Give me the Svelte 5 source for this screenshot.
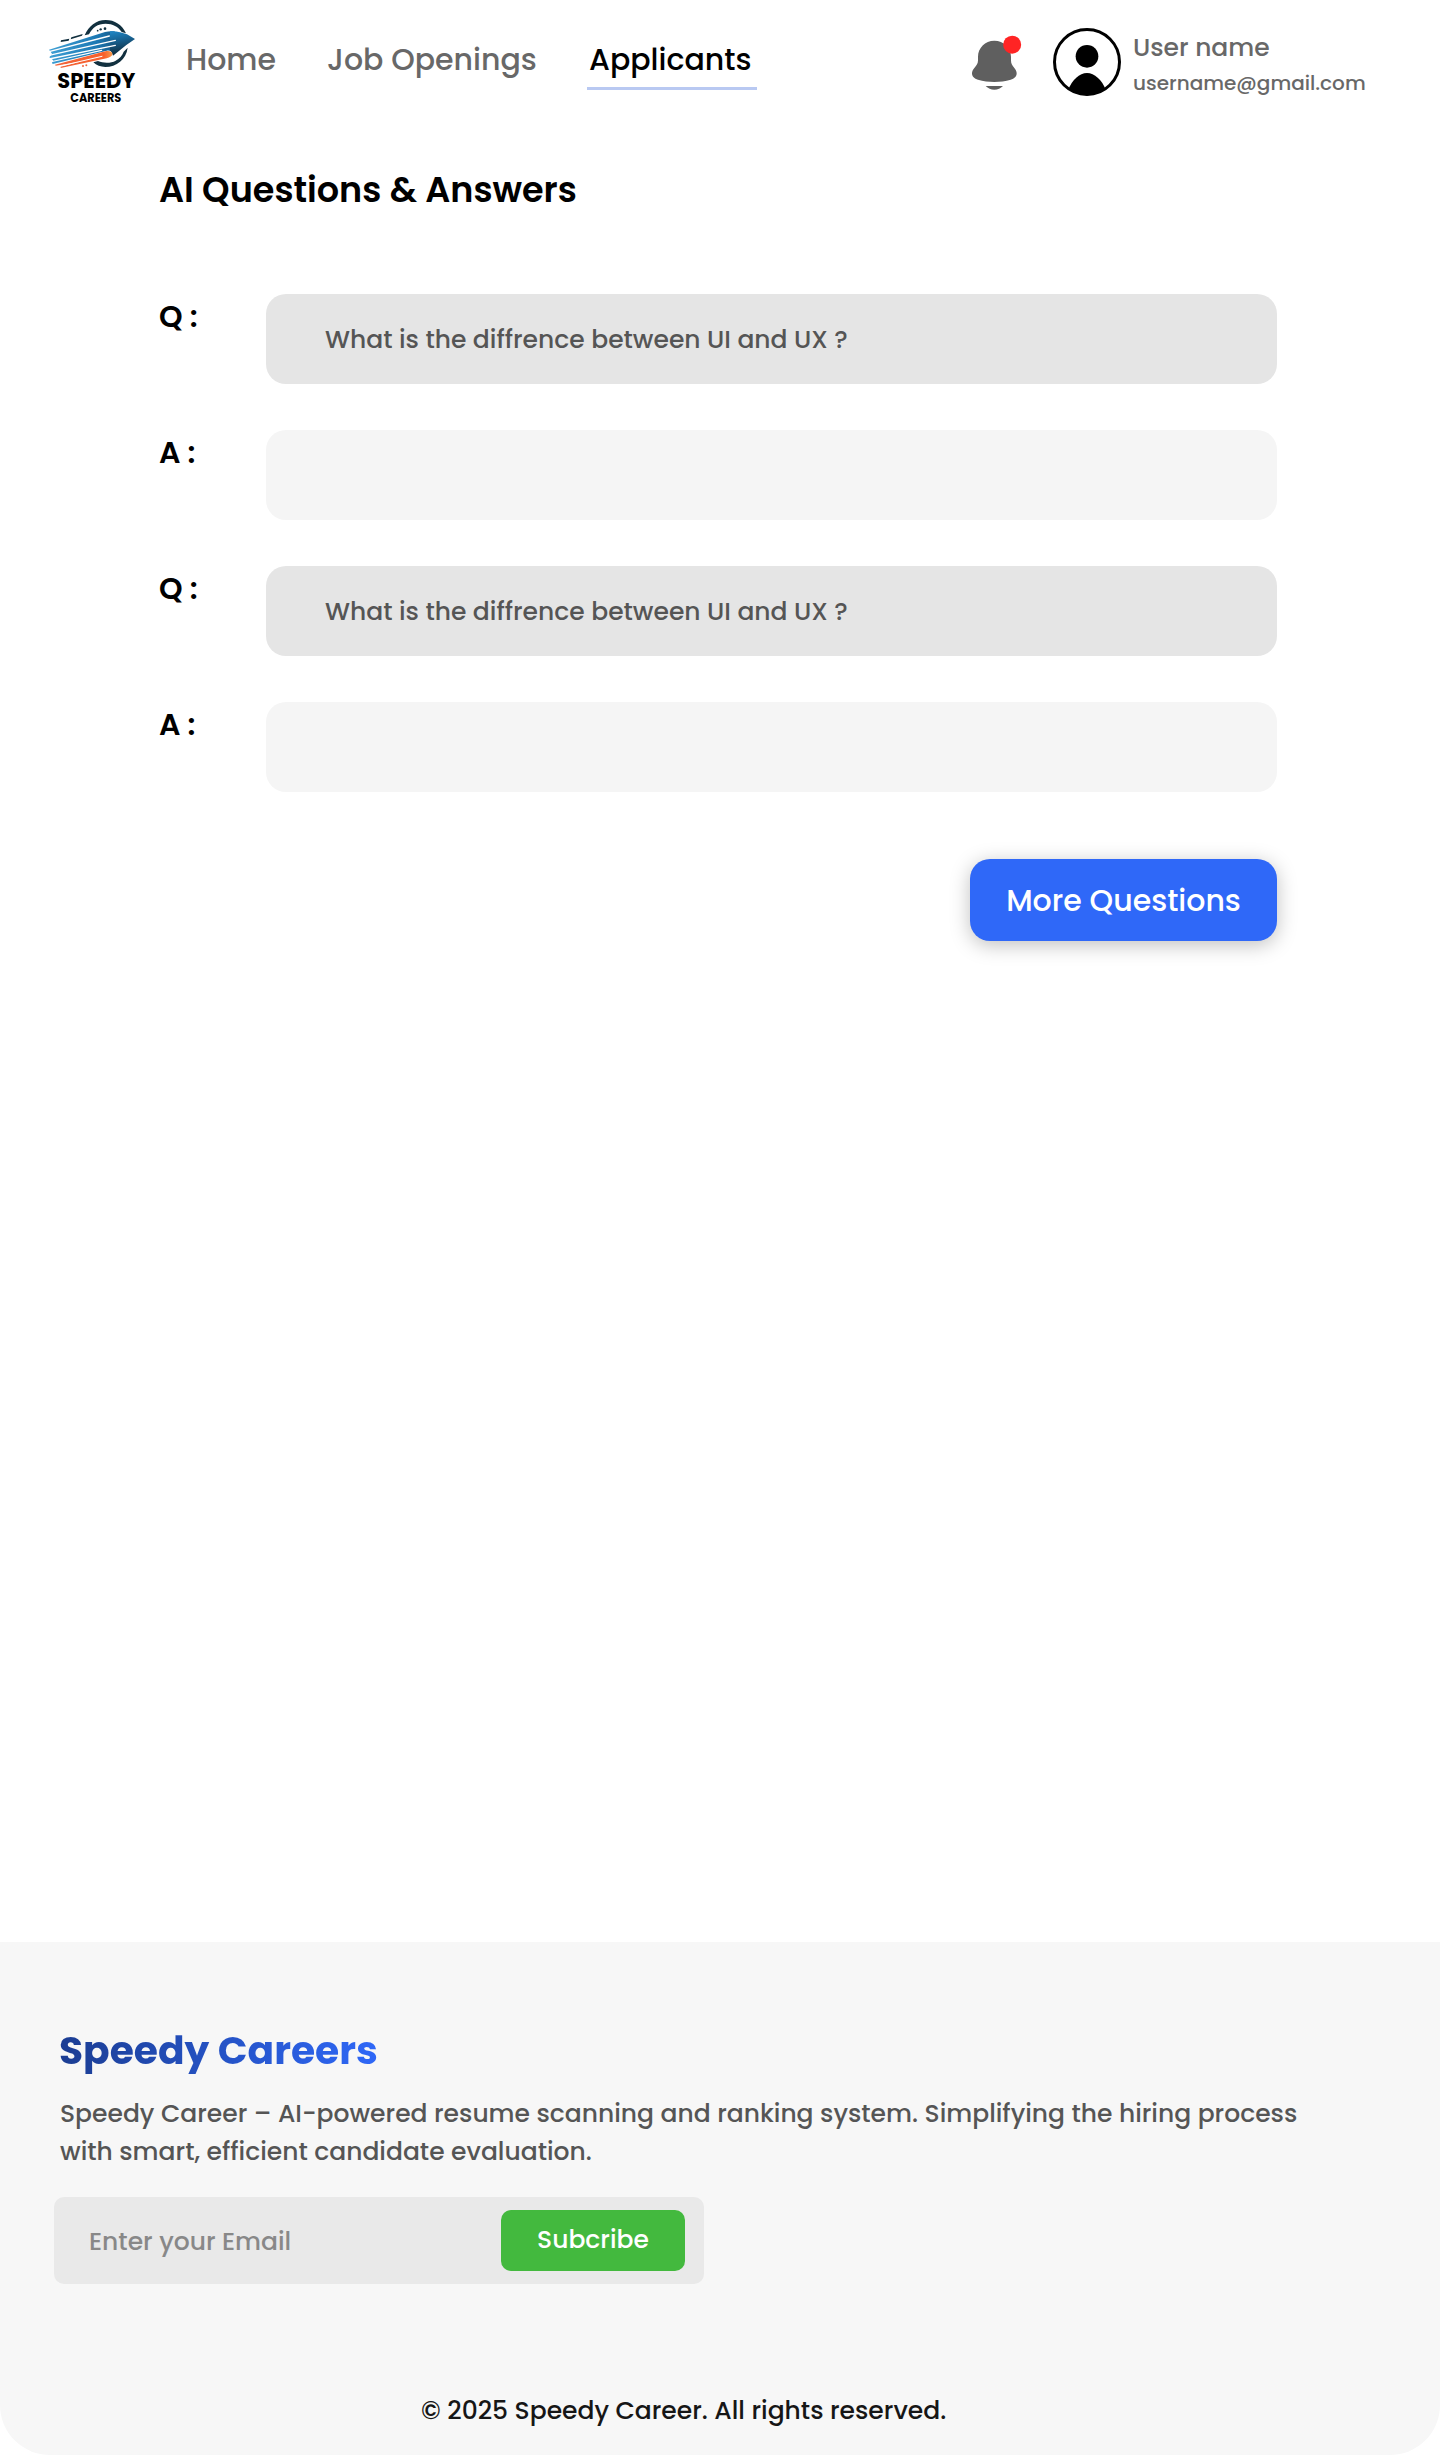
<script>
  const nav = [
    { label: 'Home', active: false },
    { label: 'Job Openings', active: false },
    { label: 'Applicants', active: true }
  ];
  const question = 'What is the diffrence between UI and UX ?';
  const entries = [
    { kind: 'q', text: question },
    { kind: 'a', text: '' },
    { kind: 'q', text: question },
    { kind: 'a', text: '' }
  ];
</script>

<div class="page">
  <header>
    <svg class="logo" viewBox="0 0 390 360" role="img" aria-label="Speedy Careers">
      <defs>
        <linearGradient id="wing" gradientUnits="userSpaceOnUse" x1="60" y1="150" x2="290" y2="175">
          <stop offset="0" stop-color="#3f9fd4" />
          <stop offset="0.6" stop-color="#1b78b3" />
          <stop offset="0.85" stop-color="#155480" />
          <stop offset="1" stop-color="#123a54" />
        </linearGradient>
        <linearGradient id="nose" gradientUnits="userSpaceOnUse" x1="255" y1="92" x2="268" y2="160">
          <stop offset="0" stop-color="#1f86c6" />
          <stop offset="0.45" stop-color="#17608f" />
          <stop offset="1" stop-color="#0f2f42" />
        </linearGradient>
        <linearGradient id="flame" gradientUnits="userSpaceOnUse" x1="75" y1="190" x2="247" y2="160">
          <stop offset="0" stop-color="#f0643c" />
          <stop offset="0.85" stop-color="#f9602a" />
          <stop offset="1" stop-color="#f79a4b" />
        </linearGradient>
      </defs>
      <g fill="#12303f">
        <path d="M164 106C176 78 198 60 227 60C254 60 276 74 288 100L275 96C265 80 248 71 227 71C203 71 187 83 177 103Z" />
        <path d="M190 187L204 183C220 190 243 190 257 182C268 176 277 166 281 155L293 143C289 178 259 201 226 201C212 201 199 196 190 187Z" />
        <path d="M124 112L158 102L156 107L122 118ZM93 121L118 116L116 122L92 126Z" />
        <circle cx="203" cy="92" r="2.5" /><circle cx="212" cy="88" r="3.5" /><circle cx="225" cy="86" r="4" />
      </g>
      <path fill="url(#wing)" d="M57 149L225 96C235 93 246 93 254 94L262 154L249 160C244 152 238 151 230 152L68 192L66 188L70 181L58 172L66 161Z" />
      <path fill="url(#nose)" d="M240 94C258 92 276 98 291 103L315 117L289 135L249 167C246 157 244 154 240 152Z" />
      <g fill="none" stroke="#fff" stroke-width="4" stroke-linecap="round">
        <path d="M57 155L238 108" />
        <path d="M57 166L256 121" />
        <path d="M57 177L256 136" />
        <path d="M60 186L215 151" stroke-width="3.5" />
      </g>
      <path fill="url(#flame)" d="M75 194L226 154C238 151 247 155 247 162C247 168 240 172 230 175L92 204L92 200L150 185L77 197Z" />
      <path d="M100 196L216 169" stroke="#fff" stroke-width="3" stroke-linecap="round" />
      <g fill="#f0643c"><circle cx="159" cy="198" r="3" /><circle cx="169" cy="196" r="3" /></g>
      <text class="brand" x="82" y="264" font-size="63" textLength="234" lengthAdjust="spacingAndGlyphs">SPEEDY</text>
      <text class="brand" x="121" y="305" font-size="34" textLength="153" lengthAdjust="spacingAndGlyphs">CAREERS</text>
    </svg>

    <nav>
      {#each nav as item}
        <a class:active={item.active} href="#top">{item.label}</a>
      {/each}
    </nav>

    <div class="account">
      <svg class="bell" viewBox="60 70 162 180" aria-label="Notifications">
        <path fill="#5f5f5f" d="M133 93C105 93 84 115 84 141V152C84 162 80 167 73 175C69 180 66 185 66 191C66 201 73 207 84 210C115 219 151 219 182 210C193 207 200 201 200 191C200 185 197 180 193 175C186 167 183 162 183 152V141C183 115 161 93 133 93Z" />
        <path fill="#5f5f5f" d="M107 229H159C152 236 143 240 133 240S114 236 107 229Z" />
        <circle cx="186.5" cy="105" r="27" fill="#ff2424" />
      </svg>
      <svg class="avatar" viewBox="0 0 204 204" aria-label="Profile">
        <circle cx="102" cy="102" r="97.5" fill="none" stroke="#000" stroke-width="9" />
        <circle cx="102" cy="85" r="34" />
        <path d="M46 184C58 156 79 135 102 135S146 156 158 184A98 98 0 0 1 46 184Z" />
      </svg>
      <div class="who">
        <span class="name">User name</span>
        <span class="mail">username@gmail.com</span>
      </div>
    </div>
  </header>

  <main>
    <h1>AI Questions &amp; Answers</h1>
    <div class="list">
      {#each entries as entry}
        <div class="row">
          <span class="tag">{entry.kind === 'q' ? 'Q :' : 'A :'}</span>
          <div class="box {entry.kind}">{entry.text}</div>
        </div>
      {/each}
    </div>
    <button class="more" type="button">More Questions</button>
  </main>

  <footer>
    <h2>Speedy Careers</h2>
    <p class="about">
      Speedy Career – AI-powered resume scanning and ranking system. Simplifying the hiring process<br />
      with smart, efficient candidate evaluation.
    </p>
    <div class="form">
      <span class="hint">Enter your Email</span>
      <button class="send" type="button">Subcribe</button>
    </div>
    <p class="copy">© 2025 Speedy Career. All rights reserved.</p>
  </footer>
</div>

<style>
  :global(body) {
    background: #fff;
  }
  .page {
    width: 1440px;
    height: 2455px;
    display: flex;
    flex-direction: column;
    font-family: Poppins, Inter, sans-serif;
    font-weight: 500;
    white-space: nowrap;
    overflow: hidden;
  }
  h1, h2, p {
    margin: 0;
  }
  button {
    border: 0;
    padding: 0;
    font: inherit;
    color: #fff;
  }
  header {
    height: 120px;
    display: flex;
    align-items: flex-start;
  }
  .logo {
    width: 130px;
    height: 120px;
    margin-left: 30px;
  }
  .brand {
    font-weight: 700;
  }
  nav {
    display: grid;
    grid-template-columns: 141px 260px 170px;
    margin: 40px 0 0 26px;
    font-size: 30px;
    line-height: 40px;
  }
  nav a {
    color: #686868;
    text-decoration: none;
  }
  nav .active {
    padding: 0 0 7px 2px;
    border-bottom: 3px solid #b9c9f2;
    color: #000;
  }
  .account {
    display: flex;
    margin-left: 213px;
    color: #686868;
  }
  .bell {
    width: 54px;
    height: 60px;
    margin-top: 33.3px;
  }
  .avatar {
    width: 68px;
    height: 68px;
    margin: 28px 12px 0 29px;
  }
  .who {
    display: flex;
    flex-direction: column;
    gap: 5px;
    margin-top: 33px;
    line-height: 30px;
  }
  .name {
    font-size: 25px;
  }
  .mail {
    font-size: 20px;
  }
  main {
    box-sizing: border-box;
    height: 1822px;
    padding: 48px 163px 0 159px;
    display: flex;
    flex-direction: column;
  }
  h1 {
    font-size: 35px;
    line-height: 44px;
    font-weight: 600;
  }
  .list {
    display: flex;
    flex-direction: column;
    gap: 46px;
    margin-top: 82px;
  }
  .row {
    display: grid;
    grid-template-columns: 107px 1fr;
  }
  .tag {
    padding-top: 3px;
    font-size: 30px;
    line-height: 40px;
    font-weight: 600;
  }
  .box {
    height: 90px;
    padding-left: 59px;
    border-radius: 20px;
    background: #f5f5f5;
    color: #555;
    font-size: 25px;
    line-height: 91px;
  }
  .box.q {
    background: #e5e5e5;
  }
  .more {
    align-self: flex-end;
    width: 307px;
    height: 82px;
    margin-top: 67px;
    padding-top: 1px;
    border-radius: 20px;
    background: #2f68f8;
    box-shadow: 0 4px 20px rgba(0, 0, 0, 0.25);
    font-size: 30px;
  }
  footer {
    box-sizing: border-box;
    height: 513px;
    padding: 85px 54px 0;
    border-radius: 0 0 50px 50px;
    background: #f7f7f7;
    color: #555;
    font-size: 25px;
  }
  h2 {
    width: 320px;
    margin-left: 5px;
    font-size: 39.2px;
    line-height: 48px;
    font-weight: 700;
    background: linear-gradient(90deg, #1b3d92, #2f68f8);
    background-clip: text;
    color: transparent;
  }
  .about {
    margin: 20px 0 0 6px;
    line-height: 38px;
  }
  .form {
    box-sizing: border-box;
    width: 650px;
    height: 87px;
    margin-top: 26px;
    padding: 0 19px 0 35px;
    display: flex;
    align-items: center;
    justify-content: space-between;
    border-radius: 10px;
    background: #e9e9e9;
  }
  .hint {
    padding-top: 2px;
    color: #888;
  }
  .send {
    width: 184px;
    height: 61px;
    padding-bottom: 2px;
    border-radius: 10px;
    background: #43b93e;
  }
  .copy {
    margin: 109px 0 0 367px;
    color: #161616;
    line-height: 36px;
  }
</style>
